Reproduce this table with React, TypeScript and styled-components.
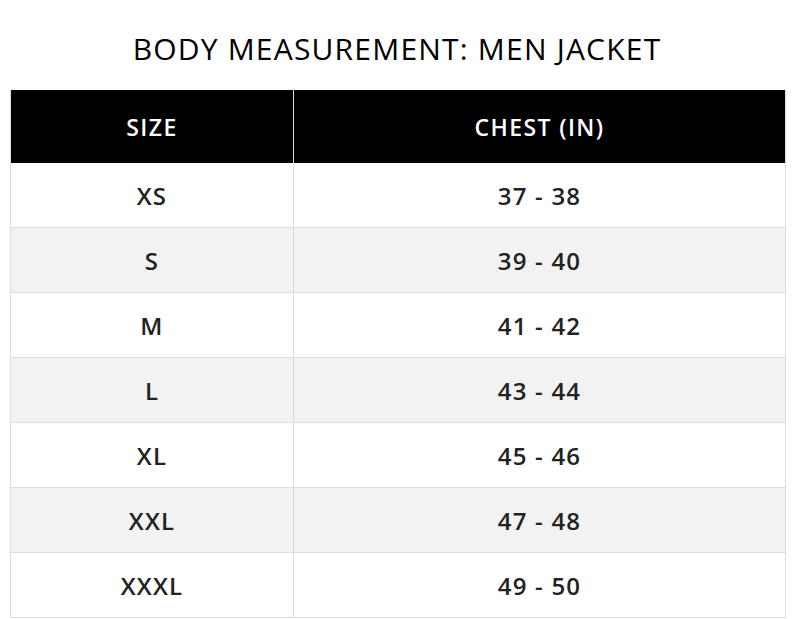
import React from "react";
import styled, { createGlobalStyle } from "styled-components";

const Global = createGlobalStyle`
  html, body { margin: 0; padding: 0; background: #fff; }
  body { font-family: "Open Sans", "Liberation Sans", sans-serif; }
`;

const Page = styled.div`
  width: 794px;
  height: 619px;
  box-sizing: border-box;
  padding: 0 10px 0 10px;
  display: flex;
  flex-direction: column;
`;

const Title = styled.h1`
  margin: 0;
  height: 90px;
  display: flex;
  align-items: center;
  justify-content: center;
  padding-top: 6px;
  box-sizing: border-box;
  font-family: "Open Sans", sans-serif;
  font-weight: 400;
  font-size: 30px;
  letter-spacing: 1.2px;
  color: #000;
`;

const Table = styled.div`
  display: grid;
  grid-template-columns: 283px 1fr;
  width: 774px;
  border-left: 1px solid #ddd;
  border-right: 1px solid #ddd;
`;

const HeadCell = styled.div<{ $last?: boolean }>`
  height: 73px;
  background: #000;
  color: #fff;
  display: flex;
  align-items: center;
  justify-content: center;
  font-weight: 600;
  font-size: 23px;
  letter-spacing: 1.4px;
  border-right: ${(p) => (p.$last ? "none" : "1px solid #ddd")};
`;

const Cell = styled.div<{ $alt: boolean; $last?: boolean }>`
  height: 64px;
  border-bottom: 1px solid #ddd;
  border-right: ${(p) => (p.$last ? "none" : "1px solid #ddd")};
  background: ${(p) => (p.$alt ? "#f2f2f2" : "#fff")};
  color: #222;
  display: flex;
  align-items: center;
  justify-content: center;
  font-weight: 600;
  font-size: 24px;
  letter-spacing: 1.2px;
`;

const rows: [string, string][] = [
  ["XS", "37 - 38"],
  ["S", "39 - 40"],
  ["M", "41 - 42"],
  ["L", "43 - 44"],
  ["XL", "45 - 46"],
  ["XXL", "47 - 48"],
  ["XXXL", "49 - 50"],
];

export default function App() {
  return (
    <>
      <Global />
      <Page>
        <Title>BODY MEASUREMENT: MEN JACKET</Title>
        <Table>
          <HeadCell>SIZE</HeadCell>
          <HeadCell $last>CHEST (IN)</HeadCell>
          {rows.map(([s, c], i) => (
            <React.Fragment key={s}>
              <Cell $alt={i % 2 === 1}>{s}</Cell>
              <Cell $alt={i % 2 === 1} $last>
                {c}
              </Cell>
            </React.Fragment>
          ))}
        </Table>
      </Page>
    </>
  );
}
